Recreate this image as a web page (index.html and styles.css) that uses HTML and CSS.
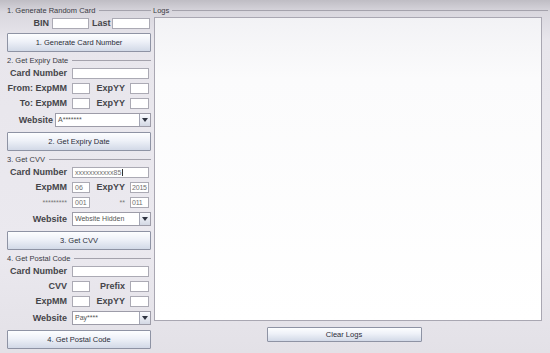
FILE: index.html
```html
<!DOCTYPE html>
<html>
<head>
<meta charset="utf-8">
<link rel="stylesheet" href="styles.css">
</head>
<body>
<div class="app">
  <div class="left">
    <div class="group">
      <div class="title"><span>1. Generate Random Card</span></div>
      <div class="binrow">
        <span class="lbl bin-l">BIN</span><span class="field bin-f"></span>
        <span class="lbl last-l">Last</span><span class="field last-f"></span>
      </div>
      <div class="btn">1. Generate Card Number</div>
    </div>

    <div class="group">
      <div class="title"><span>2. Get Expiry Date</span></div>
      <div class="form">
        <span class="lbl">Card Number</span><span class="field wide"></span>
        <span class="lbl">From: ExpMM</span><span class="field"></span><span class="lbl">ExpYY</span><span class="field"></span>
        <span class="lbl">To: ExpMM</span><span class="field"></span><span class="lbl">ExpYY</span><span class="field"></span>
      </div>
      <div class="wrow short">
        <span class="lbl">Website</span>
        <div class="select"><span class="val">A*******</span><span class="arrow"></span></div>
      </div>
      <div class="btn">2. Get Expiry Date</div>
    </div>

    <div class="group">
      <div class="title"><span>3. Get CVV</span></div>
      <div class="form">
        <span class="lbl">Card Number</span><span class="field wide">xxxxxxxxxxx85<i class="caret"></i></span>
        <span class="lbl">ExpMM</span><span class="field">06</span><span class="lbl">ExpYY</span><span class="field tight">2015</span>
        <span class="lbl dim">*********</span><span class="field">001</span><span class="lbl dim">**</span><span class="field tight">011</span>
      </div>
      <div class="wrow">
        <span class="lbl">Website</span>
        <div class="select"><span class="val">Website Hidden</span><span class="arrow"></span></div>
      </div>
      <div class="btn">3. Get CVV</div>
    </div>

    <div class="group">
      <div class="title"><span>4. Get Postal Code</span></div>
      <div class="form">
        <span class="lbl">Card Number</span><span class="field wide"></span>
        <span class="lbl">CVV</span><span class="field"></span><span class="lbl">Prefix</span><span class="field"></span>
        <span class="lbl">ExpMM</span><span class="field"></span><span class="lbl">ExpYY</span><span class="field"></span>
      </div>
      <div class="wrow">
        <span class="lbl">Website</span>
        <div class="select"><span class="val">Pay****</span><span class="arrow"></span></div>
      </div>
      <div class="btn">4. Get Postal Code</div>
    </div>
  </div>

  <div class="right">
    <div class="title"><span>Logs</span></div>
    <div class="logs"></div>
    <div class="clear-row"><div class="btn clear">Clear Logs</div></div>
  </div>
</div>
</body>
</html>
```

FILE: styles.css
```css
html, body {
  margin: 0;
  padding: 0;
}
body {
  width: 550px;
  height: 353px;
  overflow: hidden;
  font-family: "Liberation Sans", Arial, sans-serif;
  background: linear-gradient(to bottom, #bfbdc4 0px, #d9d7de 12px, #e8e6ec 40px, #ebe9ef 70%, #e3e1e7 100%);
  color: #333;
}
.app {
  display: flex;
  height: 353px;
}
.left {
  width: 144px;
  padding: 5px 0 0 7px;
  display: flex;
  flex-direction: column;
}
.group {
  display: flex;
  flex-direction: column;
  margin-bottom: 3px;
}
.title {
  display: flex;
  align-items: center;
  height: 10px;
  font-size: 7.5px;
  color: #3a3a44;
  margin-bottom: 3px;
  white-space: nowrap;
}
.title::after {
  content: "";
  flex: 1;
  margin-left: 4px;
  border-top: 1px solid #a4a2ac;
}
.lbl {
  font-size: 9px;
  font-weight: bold;
  color: #45454a;
  white-space: nowrap;
  line-height: 11px;
}
.lbl.dim {
  font-weight: normal;
  font-size: 7px;
  color: #777;
}
.field {
  display: block;
  box-sizing: border-box;
  background: #fff;
  border: 1px solid #abaab4;
  height: 11px;
  font-size: 7px;
  line-height: 9px;
  color: #707070;
  padding-left: 2px;
  white-space: nowrap;
  overflow: hidden;
  position: relative;
}
.field.tight {
  padding-left: 1px;
  letter-spacing: -0.2px;
}
.caret {
  display: inline-block;
  width: 1px;
  height: 7px;
  background: #333;
  vertical-align: -1px;
  margin-left: 1px;
}
.binrow {
  display: flex;
  align-items: center;
  height: 11px;
  margin-bottom: 4px;
}
.bin-l { width: 42px; text-align: right; margin-right: 3px; }
.bin-f { width: 37px; }
.last-l { margin-left: 3px; margin-right: 4px; width: 16px; }
.last-f { width: 38px; }
.form {
  display: grid;
  grid-template-columns: 65px 18px 40px 19px;
  grid-auto-rows: 11px;
  row-gap: 4px;
  margin-bottom: 4px;
}
.form .lbl {
  text-align: right;
  padding-right: 5px;
}
.form .wide {
  grid-column: 2 / 5;
}
.wrow {
  display: flex;
  align-items: center;
  height: 14px;
  margin-bottom: 5px;
}
.wrow .lbl {
  width: 60px;
  text-align: right;
  margin-right: 5px;
}
.wrow.short .lbl {
  width: 46px;
  margin-right: 2px;
}
.select {
  flex: 1;
  display: flex;
  box-sizing: border-box;
  height: 14px;
  background: #fff;
  border: 1px solid #9d9ca8;
}
.select .val {
  flex: 1;
  font-size: 7px;
  line-height: 12px;
  padding-left: 2px;
  color: #555;
  white-space: nowrap;
}
.select .arrow {
  width: 10px;
  border-left: 1px solid #a4a6b4;
  background: linear-gradient(to bottom, #fafbff, #d3d8e4);
  display: flex;
  align-items: center;
  justify-content: center;
}
.select .arrow::before {
  content: "";
  border-left: 3px solid transparent;
  border-right: 3px solid transparent;
  border-top: 4px solid #2e3340;
}
.btn {
  box-sizing: border-box;
  height: 19px;
  border: 1px solid #8e93a4;
  border-radius: 1px;
  background: linear-gradient(to bottom, #fdfeff 0%, #eef1f8 45%, #d2d9e7 100%);
  font-size: 7.5px;
  color: #2a2c38;
  display: flex;
  align-items: center;
  justify-content: center;
  white-space: nowrap;
}
.right {
  flex: 1;
  display: flex;
  flex-direction: column;
  padding: 5px 2px 0 2px;
}
.right .title {
  margin-bottom: 2px;
}
.right .title::after {
  margin-left: 3px;
}
.logs {
  box-sizing: border-box;
  width: 388px;
  margin-left: 1px;
  height: 304px;
  background: linear-gradient(to bottom, #f2f2f5 0%, #fbfbfc 20%, #ffffff 100%);
  border: 1px solid #a9a7b2;
}
.clear-row {
  display: flex;
  justify-content: center;
  width: 388px;
  margin-top: 6px;
}
.btn.clear {
  width: 155px;
  height: 15px;
  margin-right: 6px;
}
```
